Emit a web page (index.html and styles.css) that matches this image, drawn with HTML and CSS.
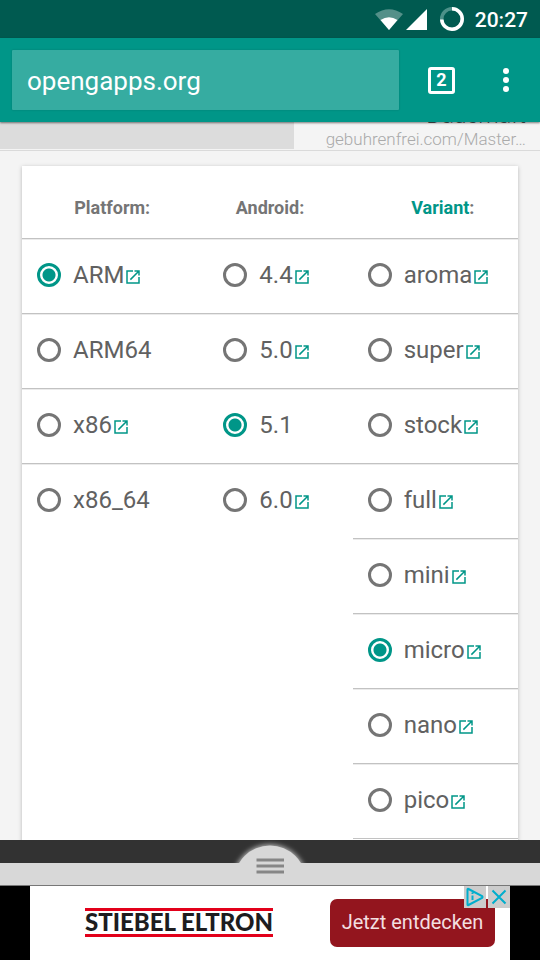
FILE: index.html
```html
<!DOCTYPE html>
<html lang="en">
<head>
<meta charset="utf-8">
<meta name="viewport" content="width=device-width, initial-scale=1">
<title>opengapps.org</title>
<link rel="stylesheet" href="styles.css">
</head>
<body>
<svg class="defs" aria-hidden="true">
  <symbol id="open" viewBox="0 0 24 24"><path d="M19 19H5V5h7V3H3v18h18v-9h-2v7zM14 3v2h3.6l-9.8 9.8 1.4 1.4L19 6.4V10h2V3h-7z"/></symbol>
</svg>

<div class="status">
  <svg class="wifi" viewBox="0 0 28 21" aria-hidden="true">
    <path d="M0 5Q14-4.500 28 5L14 21z" fill="#fff" fill-opacity=".33"/>
    <path d="M5.500 11Q14 5.500 22.500 11L14 21z" fill="#fff"/>
  </svg>
  <svg class="cell" viewBox="0 0 21 21" aria-hidden="true"><path d="M21 0V21H0z" fill="#fff"/></svg>
  <svg class="battery" viewBox="0 0 24 24" aria-hidden="true">
    <circle cx="12" cy="12" r="10.250" fill="none" stroke="#4d9189" stroke-width="3.500"/>
    <path d="M12 1.750A10.250 10.250 0 1 1 1.750 12.500" fill="none" stroke="#fff" stroke-width="3.500"/>
  </svg>
  <span class="clock">20:27</span>
</div>

<header class="toolbar">
  <input class="url" type="text" value="opengapps.org" aria-label="Address">
  <button class="tabs" type="button" aria-label="Open tabs"><span>2</span></button>
  <button class="menu" type="button" aria-label="Menu">
    <svg viewBox="0 0 6 24" aria-hidden="true"><circle cx="3" cy="3" r="3"/><circle cx="3" cy="12" r="3"/><circle cx="3" cy="21" r="3"/></svg>
  </button>
</header>

<main class="page">
  <div class="strip">
    <div class="strip-block"></div>
    <div class="strip-text">
      <div class="strip-title">Dauerhaft</div>
      <div class="strip-link">gebuhrenfrei.com/Master…</div>
    </div>
  </div>

  <form class="card">
    <section class="group" role="radiogroup" aria-labelledby="h-platform">
      <h2 class="head" id="h-platform">Platform:</h2>
      <div class="row"><label><input type="radio" name="platform" checked>ARM</label><a href="#arm" aria-label="About ARM"><svg><use href="#open"/></svg></a></div>
      <div class="row"><label><input type="radio" name="platform">ARM64</label></div>
      <div class="row"><label><input type="radio" name="platform">x86</label><a href="#x86" aria-label="About x86"><svg><use href="#open"/></svg></a></div>
      <div class="row last"><label><input type="radio" name="platform">x86_64</label></div>
    </section>
    <section class="group centered" role="radiogroup" aria-labelledby="h-android">
      <h2 class="head" id="h-android">Android:</h2>
      <div class="row"><label><input type="radio" name="android">4.4</label><a href="#a44" aria-label="About 4.4"><svg><use href="#open"/></svg></a></div>
      <div class="row"><label><input type="radio" name="android">5.0</label><a href="#a50" aria-label="About 5.0"><svg><use href="#open"/></svg></a></div>
      <div class="row"><label><input type="radio" name="android" checked>5.1</label></div>
      <div class="row last"><label><input type="radio" name="android">6.0</label><a href="#a60" aria-label="About 6.0"><svg><use href="#open"/></svg></a></div>
    </section>
    <section class="group" role="radiogroup" aria-labelledby="h-variant">
      <h2 class="head" id="h-variant"><a href="#variant">Variant</a>:</h2>
      <div class="row"><label><input type="radio" name="variant">aroma</label><a href="#aroma" aria-label="About aroma"><svg><use href="#open"/></svg></a></div>
      <div class="row"><label><input type="radio" name="variant">super</label><a href="#super" aria-label="About super"><svg><use href="#open"/></svg></a></div>
      <div class="row"><label><input type="radio" name="variant">stock</label><a href="#stock" aria-label="About stock"><svg><use href="#open"/></svg></a></div>
      <div class="row"><label><input type="radio" name="variant">full</label><a href="#full" aria-label="About full"><svg><use href="#open"/></svg></a></div>
      <div class="row"><label><input type="radio" name="variant">mini</label><a href="#mini" aria-label="About mini"><svg><use href="#open"/></svg></a></div>
      <div class="row"><label><input type="radio" name="variant" checked>micro</label><a href="#micro" aria-label="About micro"><svg><use href="#open"/></svg></a></div>
      <div class="row"><label><input type="radio" name="variant">nano</label><a href="#nano" aria-label="About nano"><svg><use href="#open"/></svg></a></div>
      <div class="row"><label><input type="radio" name="variant">pico</label><a href="#pico" aria-label="About pico"><svg><use href="#open"/></svg></a></div>
    </section>
  </form>
</main>

<div class="drawer">
  <button class="handle" type="button" aria-label="Toggle panel">
    <svg viewBox="0 0 92 45" aria-hidden="true">
      <defs>
        <filter id="glow" x="-20%" y="-20%" width="140%" height="140%"><feGaussianBlur stdDeviation="2.500"/></filter>
        <clipPath id="top"><rect width="92" height="23"/></clipPath>
      </defs>
      <g clip-path="url(#top)">
        <circle cx="46" cy="41.500" r="37" fill="#bbb" filter="url(#glow)"/>
        <circle cx="46" cy="41.500" r="36" fill="#d8d8d8"/>
      </g>
      <path d="M32.500 20H60M32.500 26H60M32.500 32H60" stroke="#868686" stroke-width="2.800"/>
    </svg>
  </button>
</div>

<aside class="ad">
  <div class="banner">
    <div class="brand">STIEBEL ELTRON</div>
    <a class="cta" href="#ad">Jetzt entdecken</a>
    <div class="choices">
      <button type="button" aria-label="Ad info"><svg viewBox="0 0 22 22"><path d="M3.500 3.500Q3.500 2.500 4.500 3L18 10Q19 11 18 12L4.500 19Q3.500 19.500 3.500 18.500zM8.500 9.500V14M8.500 6.500V8" /></svg></button>
      <button type="button" aria-label="Close ad"><svg viewBox="0 0 22 22"><path d="M4.500 4.500L17.500 17.500M17.500 4.500L4.500 17.500"/></svg></button>
    </div>
  </div>
</aside>
</body>
</html>
```
FILE: styles.css
```css
* { box-sizing: border-box; }

body {
  margin: 0;
  height: 100vh;
  display: flex;
  flex-direction: column;
  overflow: hidden;
  background: #f4f4f4;
  color: #616161;
  font-family: Roboto, sans-serif;
}

button { border: 0; padding: 0; background: none; font-family: inherit; }
svg { display: block; }
.defs { display: none; }

.status {
  flex: none;
  height: 38px;
  padding: 0 12px;
  display: flex;
  align-items: center;
  justify-content: flex-end;
  background: #005a50;
  color: #fff;
}
.wifi { width: 28px; height: 21px; margin-right: 3px; }
.cell { width: 21px; height: 21px; margin-right: 13px; }
.battery { width: 24px; height: 24px; margin-right: 11px; }
.clock { font-size: 21px; font-weight: 500; line-height: 36px; padding-top: 2px; }

.toolbar {
  position: relative;
  z-index: 1;
  flex: none;
  height: 84px;
  padding: 0 31px 0 12px;
  display: flex;
  align-items: center;
  background: #009688;
  box-shadow: 0 1px 2px rgba(0, 0, 0, .5);
}
.url {
  flex: 1;
  min-width: 0;
  height: 60px;
  padding: 1px 15px 0;
  border: 0;
  border-radius: 1px;
  background: #36aca1;
  box-shadow: 0 0 2px rgba(0, 0, 0, .2);
  color: #fff;
  font: 26px Roboto, sans-serif;
}
.tabs {
  width: 27px;
  height: 27px;
  margin: 0 48px 0 29px;
  border: 3px solid #fff;
  border-radius: 3px;
  color: #fff;
  font-size: 18px;
  font-weight: 700;
  line-height: 20px;
}
.menu svg { width: 6px; height: 24px; fill: #fff; }

.page { flex: 1; min-height: 0; overflow: hidden; }

.strip {
  height: 29px;
  margin-bottom: 15px;
  display: flex;
  align-items: flex-end;
  border-bottom: 1px solid #dadada;
  overflow: hidden;
}
.strip-block { width: 294px; height: 27px; margin-bottom: 1px; background: #dcdcdc; }
.strip-text {
  flex: 1;
  padding-right: 14px;
  text-align: right;
  font-weight: 300;
  white-space: nowrap;
}
.strip-title { font-size: 23px; line-height: 24px; color: #555; }
.strip-link { font-size: 17px; line-height: 22px; color: #aaa; }

.card {
  min-height: 100%;
  margin: 0 22px;
  display: grid;
  grid-template-columns: repeat(3, 1fr);
  align-items: start;
  background: #fff;
  box-shadow: 0 1px 4px rgba(0, 0, 0, .25);
}
.head {
  height: 73px;
  margin: 0;
  padding: 10px 0 0 15px;
  border-bottom: 1px solid #c2c2c2;
  color: #757575;
  font-size: 18px;
  font-weight: 700;
  line-height: 63px;
  text-align: center;
}
.head a { color: #009688; text-decoration: none; }
.row {
  height: 75px;
  padding: 0 0 2px 15px;
  display: flex;
  align-items: center;
  border-bottom: 1px solid #c2c2c2;
  box-shadow: inset 0 1px #ebebeb;
  font-size: 24px;
  line-height: 28px;
}
.row.last { border-bottom-color: transparent; }
.centered .head { padding-left: 0; }
.centered .row { padding-left: 36px; }
.row label { display: flex; align-items: center; }
.row input {
  appearance: none;
  width: 24px;
  height: 24px;
  margin: 0 12px 0 0;
  border: 3px solid #757575;
  border-radius: 50%;
}
.row input:checked {
  border-color: #009688;
  background: radial-gradient(circle, #009688 6px, transparent 7px);
}
.row a { padding-top: 3px; }
.row svg { width: 18px; height: 18px; fill: #009688; }

.drawer {
  position: relative;
  z-index: 1;
  flex: none;
  height: 46px;
  background: linear-gradient(#323232 23px, #d8d8d8 23px);
  border-bottom: 1px solid #777;
}
.handle {
  position: absolute;
  top: 0;
  left: 50%;
  width: 92px;
  height: 45px;
  transform: translateX(-50%);
}

.ad { flex: none; padding: 0 30px; background: #000; }
.banner {
  position: relative;
  height: 74px;
  padding: 0 15px 0 55px;
  display: flex;
  align-items: center;
  justify-content: space-between;
  background: #fff;
}
.brand {
  margin-bottom: 2px;
  padding-bottom: 2px;
  border: solid #e2001a;
  border-width: 3px 0;
  color: #1d1d1f;
  font: 900 24px/21px Lato, sans-serif;
  white-space: nowrap;
}
.cta {
  width: 165px;
  height: 48px;
  border-radius: 7px;
  background: #93151e;
  color: #f3dfe0;
  font: 20px/46px Roboto, sans-serif;
  text-align: center;
  text-decoration: none;
  white-space: nowrap;
}
.choices { position: absolute; top: 0; right: 0; display: flex; gap: 2px; }
.choices button { width: 22px; height: 22px; background: #ccc; }
.choices svg { width: 22px; height: 22px; fill: none; stroke: #00aecd; stroke-width: 2; }
```
